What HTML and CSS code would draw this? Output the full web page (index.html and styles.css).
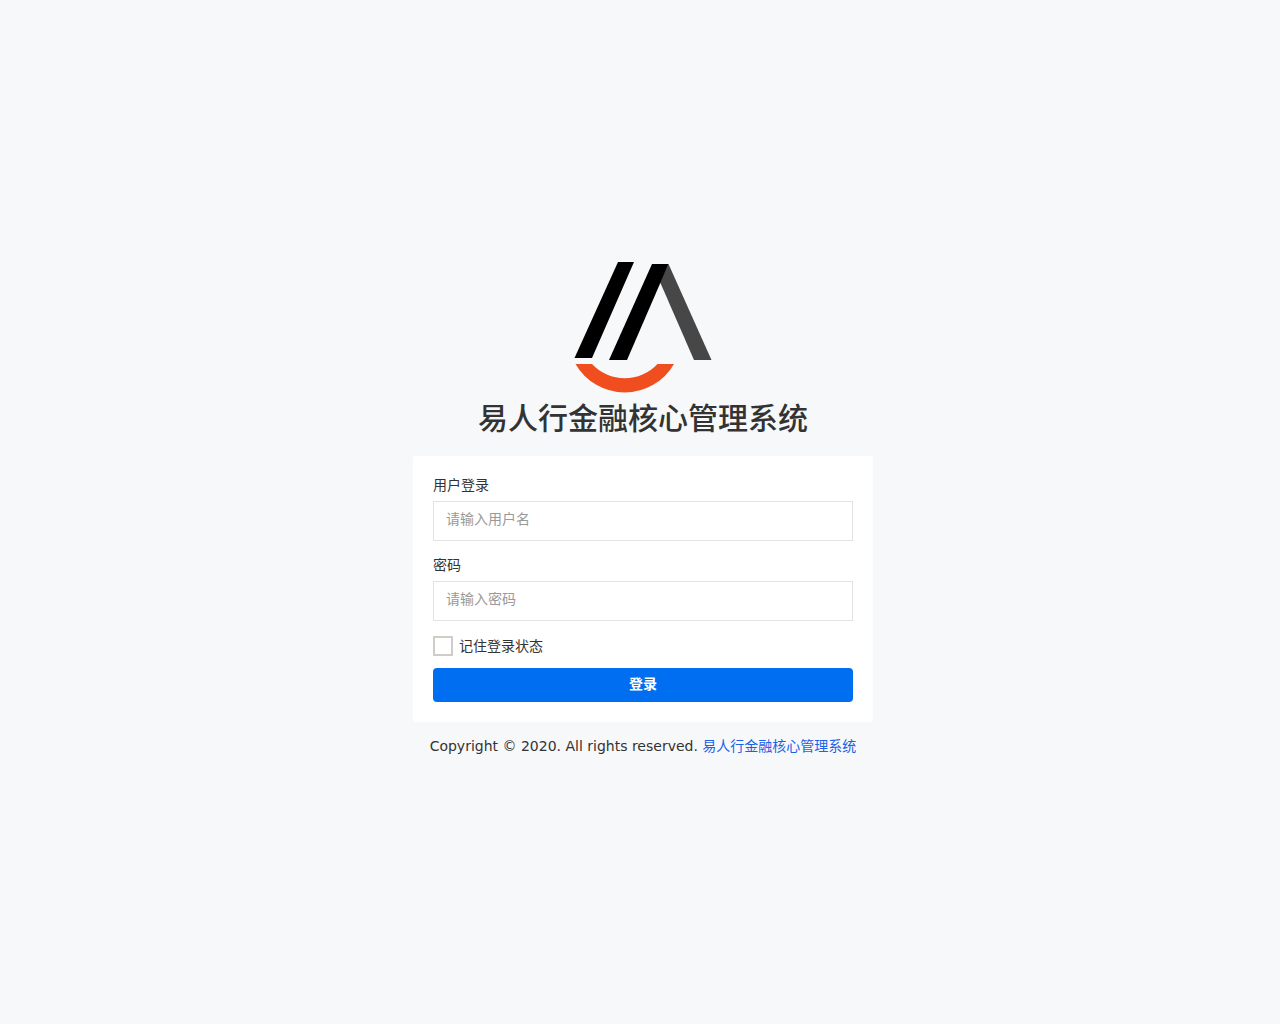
FILE: index.html
```html
<!DOCTYPE html>
<html lang="zh-CN">
<head>
<meta charset="utf-8">
<meta name="viewport" content="width=device-width, initial-scale=1">
<title>易人行金融核心管理系统</title>
<link rel="stylesheet" href="styles.css">
</head>
<body>
<main class="login">
  <header class="brand">
    <svg class="logo" viewBox="573 262 140 132" aria-hidden="true">
      <path fill="#474747" d="M668.5 264L711.5 360H694L660 282Z"/>
      <path d="M618 262H634L592 358H574.5Z"/>
      <path d="M652 264H668.5L627 360H609Z"/>
      <path fill="#f04e1f" d="M575.5 364H592A44.7 44.7 0 0 0 657.5 364H674A56.8 56.8 0 0 1 575.5 364Z"/>
    </svg>
    <h1 class="title">易人行金融核心管理系统</h1>
  </header>
  <form class="card">
    <div class="field">
      <label for="username">用户登录</label>
      <input class="text" id="username" type="text" placeholder="请输入用户名">
    </div>
    <div class="field">
      <label for="password">密码</label>
      <input class="text" id="password" type="password" placeholder="请输入密码">
    </div>
    <label class="remember"><input class="check" type="checkbox">记住登录状态</label>
    <button class="submit" type="submit">登录</button>
  </form>
  <footer class="copyright">Copyright © 2020. All rights reserved. <a href="#">易人行金融核心管理系统</a></footer>
</main>
</body>
</html>
```
FILE: styles.css
```css
* {
  box-sizing: border-box;
}

body {
  margin: 0;
  min-height: 100vh;
  padding: 0 0 6px 6px;
  display: flex;
  align-items: center;
  justify-content: center;
  background: #f7f8fa;
  color: #333;
  font: 14px/20px "DejaVu Sans", "Noto Sans CJK SC", sans-serif;
}

.login {
  width: 460px;
  max-width: 100%;
}

.brand {
  display: flex;
  flex-direction: column;
  align-items: center;
  margin-bottom: 18px;
}

.logo {
  width: 140px;
  height: 132px;
}

.title {
  margin: 6px 0 0;
  font-size: 30px;
  line-height: 38px;
  font-weight: 500;
}

.card {
  padding: 20px;
  border-radius: 2px;
  background: #fff;
}

.field {
  margin-bottom: 15px;
}

.field label {
  display: block;
  margin-bottom: 7px;
  line-height: 18px;
}

.text {
  display: block;
  width: 100%;
  height: 40px;
  padding: 0 12px 4px;
  border: 1px solid #e3e3e3;
  background: #fff;
  color: #333;
  font: inherit;
}

.text::placeholder {
  color: #999;
  opacity: 1;
}

.remember {
  display: flex;
  align-items: center;
  gap: 6px;
}

.check {
  appearance: none;
  width: 20px;
  height: 20px;
  margin: 0;
  border: 2px solid #d0cdc8;
  background: #fff;
}

.check:checked {
  background: #006ef0;
}

.submit {
  display: block;
  width: 100%;
  height: 34px;
  margin-top: 12px;
  padding: 0 0 2px;
  border: 0;
  border-radius: 4px;
  background: #006ef0;
  color: #fff;
  font: inherit;
  font-weight: 700;
}

.copyright {
  margin-top: 14px;
  text-align: center;
}

.copyright a {
  color: #1a62e6;
  text-decoration: none;
}
```
